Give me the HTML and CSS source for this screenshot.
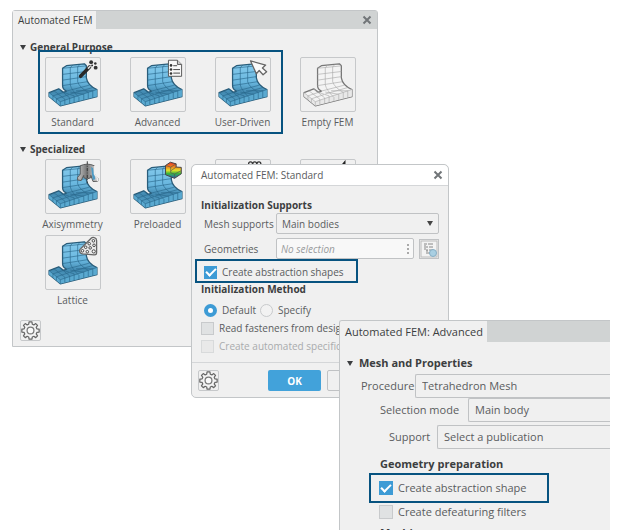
FILE: index.html
```html
<!DOCTYPE html>
<html lang="en">
<head>
<meta charset="utf-8">
<title>Automated FEM</title>
<link rel="stylesheet" href="styles.css">
</head>
<body>
<svg class="defs" aria-hidden="true">
  <defs>
    <linearGradient id="blue" x1="0" y1="0" x2="0" y2="1">
      <stop offset="0" stop-color="#86cbed"/><stop offset=".45" stop-color="#68b6de"/><stop offset=".68" stop-color="#4289b0"/><stop offset="1" stop-color="#5aa9d0"/>
    </linearGradient>
    <linearGradient id="rainbow" x1="0" y1="0" x2="0" y2="1">
      <stop offset="0" stop-color="#e8372c"/><stop offset=".3" stop-color="#f08a1c"/><stop offset=".5" stop-color="#e5e02a"/><stop offset=".7" stop-color="#3cb83c"/><stop offset="1" stop-color="#2458c8"/>
    </linearGradient>
    <linearGradient id="metal" x1="0" y1="0" x2="1" y2="0">
      <stop offset="0" stop-color="#c4c4c4"/><stop offset=".45" stop-color="#777"/><stop offset="1" stop-color="#e2e2e2"/>
    </linearGradient>
    <symbol id="mesh" viewBox="0 0 165 165">
      <path class="mesh-body" d="M50 32L62 24L118 18L124 24V62Q128 86 157 98V120L43 149L8 120V108L38 96L53 107L62 103Q50 98 50 86Z"/>
      <path class="mesh-side" d="M8 108L43 136L157 98V120L43 149L8 120Z"/>
      <g class="mesh-line">
        <path d="M50 32L120 25L124 24M74 30L82 22M97 28L104 20M74 30V84Q78 100 101 123V135M97 28V74Q103 92 130 107V127M50 51L124 42M50 69L124 58M50 86L126 74M62 103L132 85M74 112L144 92"/>
        <path d="M23 102L57 128V145M38 96L72 124V142M53 107L86 118V139M74 106L116 113V131M92 102L144 102V124M20 118L53 107M31 127L70 114M20 118V130M31 127V139"/>
        <path d="M8 108L43 136L157 98M43 136V149"/>
      </g>
    </symbol>
    <symbol id="gear" viewBox="0 0 20 20">
      <path fill="#f4f4f4" stroke="#666" stroke-width="1.3" stroke-linejoin="round" d="M8.500 1h3l.4 2.400 1.600.7 2-1.400 1.900 1.900-1.400 2 .7 1.600 2.400.4v3l-2.400.4-.7 1.600 1.400 2-1.900 1.900-2-1.400-1.600.7-.4 2.400h-3l-.4-2.400-1.600-.7-2 1.400-1.900-1.900 1.400-2-.7-1.600L.9 11.600v-3l2.400-.4.7-1.600-1.400-2 1.900-1.900 2 1.400 1.600-.7Z"/>
      <circle cx="10" cy="10" r="3.600" fill="#fafafa" stroke="#777" stroke-width="1.300"/>
    </symbol>
  </defs>
</svg>

<main class="desktop">
  <section class="panel launcher" aria-label="Automated FEM">
    <header class="tabs">
      <h1 class="tab">Automated FEM</h1>
      <button class="close" aria-label="Close"><svg viewBox="0 0 10 10"><path d="M1.500 1.500L8.500 8.500M8.500 1.500L1.500 8.500"/></svg></button>
    </header>
    <div class="launcher-body">
      <h2 class="group">General Purpose</h2>
      <div class="tiles">
        <button class="tile"><svg viewBox="0 0 165 165"><use href="#mesh"/>
          <path d="M106 57L134 28" stroke="#292929" stroke-width="11" stroke-linecap="round"/><path d="M129 33L137 25" stroke="#ddd" stroke-width="5"/>
          <g fill="#333"><circle cx="139" cy="13" r="6"/><circle cx="152" cy="17" r="4"/><circle cx="153" cy="30" r="6"/><circle cx="142" cy="23" r="3"/></g></svg><span>Standard</span></button>
        <button class="tile"><svg viewBox="0 0 165 165"><use href="#mesh"/>
          <path d="M115 7H143L156 20V57H115Z" fill="#f7f7f7" stroke="#555" stroke-width="3"/><path d="M143 7V20H156" fill="#ccc" stroke="#555" stroke-width="3"/>
          <path d="M130 24H142M130 36H151M130 47H151" stroke="#444" stroke-width="3"/><g fill="#333"><circle cx="123" cy="23" r="4"/><circle cx="123" cy="36" r="4"/><circle cx="123" cy="48" r="4"/></g></svg><span>Advanced</span></button>
        <button class="tile"><svg viewBox="0 0 165 165"><use href="#mesh"/>
          <path d="M106 9L153 22L143 31L156 43L145 52L133 39L124 49Z" fill="#fafafa" stroke="#666" stroke-width="4" stroke-linejoin="round"/></svg><span>User-Driven</span></button>
        <button class="tile empty"><svg viewBox="0 0 165 165"><use href="#mesh"/></svg><span>Empty FEM</span></button>
      </div>
      <h2 class="group">Specialized</h2>
      <div class="tiles">
        <button class="tile"><svg viewBox="0 0 165 165"><use href="#mesh"/>
          <path d="M105 18Q127 8 149 18V44L160 57V66L145 67L138 48V55L127 59L116 55V48L108 64L97 62V54L105 44Z" fill="url(#metal)" stroke="#555" stroke-width="3"/>
          <path d="M139 22L145 26L152 60L144 62Z" fill="#4c9ac4"/><path d="M149 18V44L159 57V66" fill="none" stroke="#eee" stroke-width="4"/>
          <path d="M127 4V72" stroke="#333" stroke-width="3" stroke-dasharray="10 4 3 4"/></svg><span>Axisymmetry</span></button>
        <button class="tile"><svg viewBox="0 0 165 165"><use href="#mesh"/>
          <path d="M106 17L121 7L139 12V22L155 23V43L134 57L106 46Z" fill="url(#rainbow)" stroke="#444" stroke-width="3" stroke-linejoin="round"/>
          <path d="M106 17L122 22L139 12M122 22V40L134 44L155 33M122 34L139 22M134 44V57" fill="none" stroke="#555" stroke-width="2"/></svg><span>Preloaded</span></button>
        <button class="tile" aria-label="Modal"><svg viewBox="0 0 165 165"><use href="#mesh"/>
          <g fill="#eee" stroke="#333" stroke-width="4"><circle cx="106" cy="12" r="6"/><circle cx="119" cy="12" r="6"/><circle cx="132" cy="12" r="6"/></g></svg></button>
        <button class="tile" aria-label="Impact"><svg viewBox="0 0 165 165"><use href="#mesh"/><path d="M124 20L134 8V34" stroke="#222" stroke-width="6" fill="none"/></svg></button>
        <button class="tile"><svg viewBox="0 0 165 165"><use href="#mesh"/>
          <path d="M139 7Q143 3 149 5Q156 7 156 14V51Q156 59 148 59L112 56Q103 54 103 46Q103 42 107 39Z" fill="#e9e9e9" stroke="#666" stroke-width="4"/>
          <g fill="#fafafa" stroke="#444" stroke-width="3"><circle cx="146" cy="15" r="4"/><circle cx="133" cy="24" r="4"/><circle cx="148" cy="29" r="4"/><circle cx="122" cy="35" r="4"/><circle cx="136" cy="37" r="4"/><circle cx="112" cy="46" r="4"/><circle cx="127" cy="49" r="4"/><circle cx="147" cy="48" r="5"/></g></svg><span>Lattice</span></button>
      </div>
      <button class="gear" aria-label="Settings"><svg><use href="#gear"/></svg></button>
    </div>
    <div class="highlight highlight-tiles"></div>
  </section>

  <section class="panel standard" aria-label="Automated FEM: Standard">
    <header class="titlebar">
      <h1>Automated FEM: Standard</h1>
      <button class="close" aria-label="Close"><svg viewBox="0 0 10 10"><path d="M1.500 1.500L8.500 8.500M8.500 1.500L1.500 8.500"/></svg></button>
    </header>
    <form class="standard-body">
      <h2>Initialization Supports</h2>
      <div class="field"><label for="supports">Mesh supports</label><select id="supports" class="drop"><option>Main bodies</option></select></div>
      <div class="field"><label for="geo">Geometries</label>
        <div class="pick"><input id="geo" type="text" placeholder="No selection"><i class="grip"></i></div>
        <button type="button" class="tree" aria-label="Select from tree"><svg viewBox="0 0 18 18"><rect x="1" y="1" width="16" height="16" fill="#f3f3f3" stroke="#bbb"/><path d="M4 4h3M8 4h5M6 7h2M9 7h4M6 10h2M9 10h4M8 13h3M5 5v5M7 10v4" stroke="#888"/><circle cx="13" cy="13" r="3.500" fill="#a9cfe2" stroke="#86aec4"/></svg></button></div>
      <label class="option inset marked"><input type="checkbox" checked>Create abstraction shapes<span class="highlight highlight-shapes"></span></label>
      <h2>Initialization Method</h2>
      <div class="radios">
        <label class="option inset"><input type="radio" name="method" checked>Default</label>
        <label class="option"><input type="radio" name="method">Specify</label>
      </div>
      <label class="option"><input type="checkbox">Read fasteners from design</label>
      <label class="option off"><input type="checkbox" disabled>Create automated specific</label>
    </form>
    <footer class="actions">
      <button class="gear" aria-label="Settings"><svg><use href="#gear"/></svg></button>
      <button class="ok">OK</button>
      <button class="cancel" aria-label="Cancel"></button>
    </footer>
  </section>

  <section class="panel advanced" aria-label="Automated FEM: Advanced">
    <header class="tabs"><h1 class="tab">Automated FEM: Advanced</h1></header>
    <form class="advanced-body">
      <h2 class="group">Mesh and Properties</h2>
      <div class="field procedure"><label for="proc">Procedure</label><select id="proc"><option>Tetrahedron Mesh</option></select></div>
      <div class="field mode"><label for="mode">Selection mode</label><select id="mode"><option>Main body</option></select></div>
      <div class="field support"><label for="support">Support</label><select id="support"><option>Select a publication</option></select></div>
      <h3>Geometry preparation</h3>
      <label class="option marked"><input type="checkbox" checked>Create abstraction shape<span class="highlight highlight-shape"></span></label>
      <label class="option"><input type="checkbox">Create defeaturing filters</label>
      <h3 class="next">Meshing</h3>
    </form>
  </section>
</main>
</body>
</html>
```
FILE: styles.css
```css
* { box-sizing: border-box; }
body { margin: 0; background: #fff; color: #5a5c5e; font: 10px/16px "Open Sans", "Noto Sans", sans-serif; }
h1, h2, h3 { margin: 0; font-size: inherit; line-height: inherit; font-weight: 400; }
h2, h3 { color: #3c3e40; font-weight: 700; }
button, input, select { margin: 0; font: inherit; color: inherit; }
button { padding: 0; border: 0; background: none; }
.defs { position: absolute; width: 0; height: 0; }
.desktop { position: relative; min-height: 100vh; overflow: hidden; }

/* Windows */
.panel { position: absolute; border: 1px solid #c3c6c8; background: #f0f0f0; }
.launcher { left: 12px; top: 10px; width: 366px; border-radius: 3px 3px 0 0; }
.standard { left: 191px; top: 164px; width: 258px; border-radius: 5px; }
.advanced { left: 339px; top: 320px; right: 10px; bottom: 2px; overflow: hidden; border-width: 1px 0 0 1px; border-radius: 3px 0 0 0; font-size: 11px; }

.tabs { display: flex; align-items: stretch; justify-content: space-between; background: #d0d3d3; }
.tab { padding: 0 4px 0 5px; background: #f0f0f0; color: #3c3e40; line-height: 18px; }
.close { display: flex; align-items: center; padding: 0 5px; }
.close svg { width: 10px; height: 10px; stroke: #717578; stroke-width: 2; }
.highlight { position: absolute; border: 2px solid #075380; pointer-events: none; }

/* Launcher */
.launcher-body { padding: 10px 7px 5px; }
.group { display: flex; align-items: center; gap: 4px; }
.group::before { content: ""; border: 3px solid transparent; border-top: 5px solid #3c3e40; border-bottom: 0; }
.tiles { display: grid; grid-template-columns: repeat(4, 85px); row-gap: 1px; margin: 2px 0 9px 10px; }
.tile { display: flex; flex-direction: column; align-items: center; line-height: 20px; }
.tile svg { width: 56px; height: 55px; border: 1px solid #c6c8ca; border-radius: 2px; fill: none; }
.mesh-body { fill: var(--body, url(#blue)); stroke: var(--edge, #2a5d7a); stroke-width: 4; stroke-linejoin: round; }
.mesh-side { fill: var(--side, #5aa9d0); }
.mesh-line { fill: none; stroke: var(--line, #29688b); stroke-width: 2; }
.empty { --body: #f4f4f4; --side: #e8e8e8; --edge: #777; --line: #aaa; }
.gear { display: block; width: 21px; height: 21px; border: 1px solid #c6c8ca; border-radius: 2px; }
.gear svg { display: block; width: 19px; height: 19px; }
.launcher .gear { margin-top: 10px; }
.highlight-tiles { left: 25px; top: 39px; width: 245px; height: 84px; }

/* Fields */
.field { display: flex; align-items: center; }
select, .pick { min-width: 0; flex: 1; border: 1px solid #c0c2c4; border-radius: 2px; background: #f0f0f0; }
select { appearance: none; padding: 0 5px; }
.option { display: flex; align-items: center; gap: 5px; }
.option input { appearance: none; flex: none; width: 13px; height: 13px; border: 1px solid #c8cacc; background: #e0e2e3; }
.option input[type="radio"] { border-radius: 50%; background: #f2f2f2; }
.option input[type="radio"]:checked { border: 4px solid #3d9bd5; background: #fff; }
.option input[type="checkbox"]:checked { display: grid; place-items: center; border-color: #3d9bd5; background: #3d9bd5; }
.option input[type="checkbox"]:checked::before { content: ""; width: 8px; height: 4px; margin-bottom: 2px; border: solid #fff; border-width: 0 0 2px 2px; transform: rotate(-45deg); }
.marked { position: relative; }

/* Standard dialog */
.titlebar { display: flex; justify-content: space-between; height: 21px; padding-left: 9px; border-bottom: 1px solid #d4d6d8; border-radius: 5px 5px 0 0; background: #fff; line-height: 20px; }
.standard-body { padding: 11px 9px 7px; }
.standard .field { height: 21px; margin-bottom: 4px; padding-left: 3px; }
.standard .field label { width: 72px; white-space: nowrap; }
.standard select, .pick { height: 21px; }
.drop { background: url("data:image/svg+xml,%3Csvg xmlns='http://www.w3.org/2000/svg' viewBox='0 0 6 5'%3E%3Cpath d='M0 0h6L3 5z' fill='%23444'/%3E%3C/svg%3E") right 5px center / 6px 5px no-repeat #f0f0f0; }
.pick { display: flex; align-items: center; background: #f8f8f8; padding: 0 4px; }
.pick input { flex: 1; min-width: 0; padding: 0; border: 0; background: none; outline: 0; }
.pick input::placeholder { color: #999b9d; font-style: italic; opacity: 1; }
.grip { width: 2px; height: 10px; background: repeating-linear-gradient(#aaa 0 2px, transparent 2px 4px); }
.tree { width: 20px; height: 20px; margin-left: 5px; border: 1px solid #c0c2c4; }
.tree svg { display: block; width: 18px; height: 18px; }
.standard .option { height: 18px; white-space: nowrap; }
.standard .inset { padding-left: 3px; }
.standard .marked { height: 18px; margin: 2px 0 0; }
.radios { display: flex; gap: 4px; margin: 4px 0 0; }
.off { color: #a9abad; }
.standard .off input { background: #e9e9e9; border-color: #d8dadb; }
.highlight-shapes { left: -6px; top: -4px; width: 163px; height: 24px; }
.actions { display: flex; align-items: center; padding: 7px 6px 6px; border-top: 1px solid #d4d6d8; }
.ok, .cancel { width: 53px; height: 21px; border-radius: 2px; }
.ok { margin: 0 6px 0 49px; background: #42a2da; color: #fff; font-weight: 700; }
.cancel { border: 1px solid #c0c2c4; }

/* Advanced panel */
.advanced .tab { padding: 0 4px 0 5px; line-height: 21px; }
.advanced-body { padding: 13px 0 0 7px; }
.advanced .group { gap: 6px; margin-bottom: 3px; }
.advanced .field { height: 24px; }
.advanced select { height: 24px; padding: 0 6px; border-right: 0; border-radius: 2px 0 0 2px; }
.procedure { padding-left: 14px; }
.procedure label { width: 54px; }
.mode { padding-left: 33px; }
.mode label { width: 88px; }
.support { margin-top: 3px; padding-left: 42px; }
.support label { width: 48px; }
.advanced h3 { margin: 7px 0 0 33px; }
.advanced .option { height: 24px; padding-left: 32px; gap: 5px; }
.advanced .marked { margin-top: 4px; }
.advanced .option input { width: 14px; height: 14px; }
.advanced .next { margin-top: 1px; }
.highlight-shape { left: 22px; top: -3px; width: 180px; height: 30px; }
```
